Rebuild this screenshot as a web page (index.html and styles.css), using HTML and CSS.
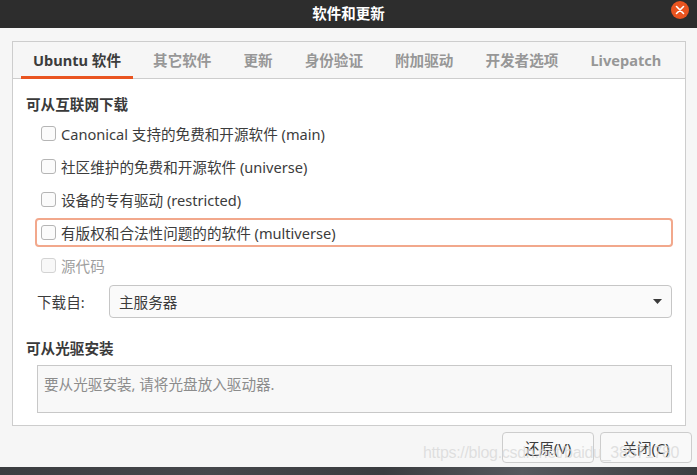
FILE: index.html
```html
<!DOCTYPE html>
<html lang="zh">
<head>
<meta charset="utf-8">
<title>软件和更新</title>
<link rel="stylesheet" href="styles.css">
</head>
<body>
<div class="window">
  <header class="titlebar">
    <span class="title">软件和更新</span>
    <span class="close">
      <svg width="18" height="18" viewBox="0 0 18 18"><circle cx="9" cy="9" r="9" fill="#e95420"/><path d="M5.5 5.5 L12.5 12.5 M12.5 5.5 L5.5 12.5" stroke="#fff" stroke-width="1.6" stroke-linecap="round"/></svg>
    </span>
  </header>
  <main class="main">
    <section class="frame">
      <nav class="tabs">
        <span class="tab active">Ubuntu 软件</span>
        <span class="tab">其它软件</span>
        <span class="tab">更新</span>
        <span class="tab">身份验证</span>
        <span class="tab">附加驱动</span>
        <span class="tab">开发者选项</span>
        <span class="tab">Livepatch</span>
      </nav>
      <div class="content">
        <h2 class="heading">可从互联网下载</h2>
        <div class="checks">
          <label class="check"><span class="box"></span>Canonical 支持的免费和开源软件 (main)</label>
          <label class="check"><span class="box"></span>社区维护的免费和开源软件 (universe)</label>
          <label class="check"><span class="box"></span>设备的专有驱动 (restricted)</label>
          <label class="check focused"><span class="box"></span>有版权和合法性问题的的软件 (multiverse)</label>
          <label class="check disabled"><span class="box"></span>源代码</label>
        </div>
        <div class="source-row">
          <span class="source-label">下载自:</span>
          <div class="combo">
            <span>主服务器</span>
            <svg class="arrow" width="9" height="5" viewBox="0 0 9 5"><path d="M0 0 H9 L4.5 5 Z" fill="#3a3a3a"/></svg>
          </div>
        </div>
        <h2 class="heading heading2">可从光驱安装</h2>
        <div class="cdbox">要从光驱安装, 请将光盘放入驱动器.</div>
      </div>
    </section>
    <footer class="buttons">
      <button class="btn">还原(V)</button>
      <button class="btn">关闭(C)</button>
    </footer>
  </main>
  <div class="watermark">https://blog.csdn.net/baidu_38571780</div>
  <div class="desktop"></div>
</div>
</body>
</html>
```
FILE: styles.css
```css
* { box-sizing: border-box; }
html, body { margin: 0; padding: 0; }
body {
  width: 697px;
  height: 475px;
  overflow: hidden;
  background: #f6f6f6;
  font-family: "Noto Sans", "Noto Sans CJK SC", sans-serif;
  font-size: 14.6px;
  color: #3d3d3d;
}
.window {
  position: relative;
  width: 697px;
  height: 475px;
  display: flex;
  flex-direction: column;
}
.titlebar {
  position: relative;
  height: 28px;
  background: #2d2d2d;
  display: flex;
  align-items: center;
  justify-content: center;
  flex-shrink: 0;
}
.title {
  color: #ffffff;
  font-family: "Noto Sans CJK SC", sans-serif;
  font-weight: 700;
  font-size: 14.5px;
  line-height: 1;
  margin-top: -2px;
}
.close {
  position: absolute;
  left: 671px;
  top: 1px;
  width: 18px;
  height: 18px;
}
.close svg { display: block; }
.main {
  flex: 1;
  padding: 13px 11px 0 12px;
  display: flex;
  flex-direction: column;
}
.frame {
  border: 1px solid #cdcdcd;
  height: 385px;
  display: flex;
  flex-direction: column;
}
.tabs {
  height: 37px;
  display: flex;
  gap: 8px;
  padding-left: 8px;
  border-bottom: 1px solid #cdcdcd;
  background: #f6f6f6;
}
.tab {
  display: flex;
  align-items: center;
  padding: 1px 12px 0 12px;
  font-weight: 700;
  font-size: 14.6px;
  color: #979797;
  border-bottom: 3px solid transparent;
  margin-bottom: -1px;
  white-space: nowrap;
}
.tab.active {
  color: #3c3c3c;
  border-bottom-color: #e95420;
}
.content {
  flex: 1;
  background: #ffffff;
  padding: 15px 12px 0 13px;
}
.heading {
  margin: 0;
  font-size: 14.6px;
  font-weight: 700;
  line-height: 20px;
  color: #3a3a3a;
}
.checks {
  margin-top: 5px;
  padding-left: 9px;
  display: flex;
  flex-direction: column;
  gap: 4px;
}
.check {
  height: 29px;
  display: flex;
  align-items: center;
  padding-left: 6px;
  border: 2px solid transparent;
  border-radius: 4px;
  color: #3c3c3c;
  white-space: nowrap;
}
.check.focused {
  border-color: #f2a88c;
}
.box {
  width: 15px;
  height: 15px;
  border: 1px solid #b5b5b5;
  border-radius: 3px;
  background: #fbfbfb;
  margin-left: -2px;
  margin-right: 5px;
  flex-shrink: 0;
}
.check.disabled { color: #9f9f9f; }
.check.disabled .box { border-color: #d3d3d3; background: #f8f8f8; }
.source-row {
  margin-top: 5px;
  display: flex;
  align-items: center;
  padding-left: 11px;
}
.source-label {
  width: 72px;
  color: #3c3c3c;
}
.combo {
  flex: 1;
  height: 33px;
  margin-right: 1px;
  border: 1px solid #c6c6c6;
  border-radius: 4px;
  background: #fafafa;
  display: flex;
  align-items: center;
  justify-content: space-between;
  padding: 0 9px 0 9px;
  color: #3c3c3c;
}
.arrow { display: block; }
.heading2 { margin-top: 20px; }
.cdbox {
  margin: 7px 1px 0 11px;
  height: 48px;
  border: 1px solid #c8c8c8;
  background: #f8f8f8;
  padding: 8px 6px;
  color: #8c8c8c;
  line-height: 20px;
}
.buttons {
  display: flex;
  justify-content: flex-end;
  gap: 6px;
  padding-top: 6px;
  margin-right: -6px;
}
.btn {
  width: 92px;
  height: 31px;
  border: 1px solid #cdcdcd;
  border-radius: 4px;
  background: #f9f9f9;
  font-family: "Noto Sans", "Noto Sans CJK SC", sans-serif;
  font-size: 14.6px;
  color: #3c3c3c;
  padding: 0;
}
.desktop {
  height: 8px;
  background: linear-gradient(90deg, #3b3d40 0%, #45474b 30%, #3a3c3f 55%, #55585d 75%, #3c3e41 100%);
  flex-shrink: 0;
}
.watermark {
  position: absolute;
  left: 423px;
  top: 444px;
  font-family: "Liberation Sans", sans-serif;
  font-size: 16px;
  letter-spacing: -0.3px;
  color: rgba(215, 215, 215, 0.75);
  white-space: nowrap;
  pointer-events: none;
}
```
